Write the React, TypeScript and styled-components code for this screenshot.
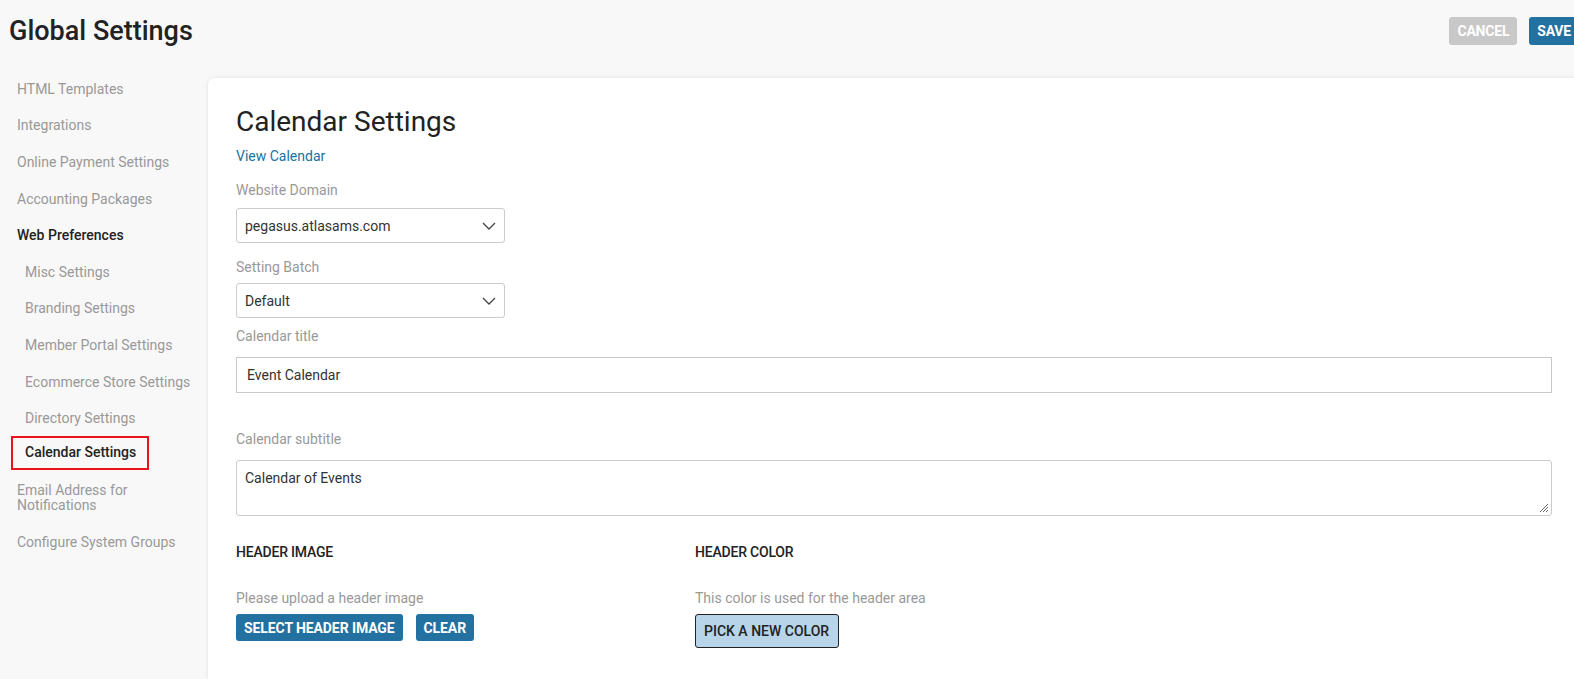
import styled, { createGlobalStyle } from 'styled-components';

const GlobalStyle = createGlobalStyle`
	body {
		margin: 0;
		background: #f8f8f8;
		font-family: Roboto, 'Liberation Sans', sans-serif;
		overflow: hidden;
	}
`;

const Page = styled.div`
	width: 1600px;
	min-height: 679px;
	display: flex;
	flex-direction: column;
`;

const TopBar = styled.div`
	display: flex;
	align-items: center;
	justify-content: space-between;
	height: 62px;
	padding: 0 21px 9px 9px;
`;

const PageTitle = styled.h1`
	margin: 0;
	font-size: 27px;
	font-weight: 500;
	color: #222;
`;

const Actions = styled.div`
	display: flex;
	gap: 12px;
`;

const ActionButton = styled.button<{ $primary?: boolean }>`
	height: 28px;
	padding: 0 8px;
	border: none;
	border-radius: 3px;
	font-family: Roboto, 'Liberation Sans', sans-serif;
	font-size: 14px;
	font-weight: 700;
	letter-spacing: -0.2px;
	color: white;
	background: ${(p) => (p.$primary ? '#2271a1' : '#c8c8c8')};
`;

const Body = styled.div`
	display: flex;
	flex: 1;
`;

const Sidebar = styled.nav`
	width: 208px;
	flex-shrink: 0;
	box-sizing: border-box;
	display: flex;
	flex-direction: column;
	padding: 0 16px 0 0;
`;

const NavItem = styled.div<{ $sub?: boolean; $bold?: boolean; $active?: boolean }>`
	padding: 10.8px 0 10.8px ${(p) => (p.$sub ? '25px' : '17px')};
	font-size: 14px;
	line-height: 15px;
	color: ${(p) => (p.$bold || p.$active ? '#222' : '#999')};
	font-weight: ${(p) => (p.$bold || p.$active ? 500 : 400)};
	${(p) =>
		p.$active &&
		`
		margin: -1px 0 2.5px 11px;
		padding: 7.5px 0 7.5px 12px;
		width: 138px;
		box-sizing: border-box;
		border: 2px solid #e8131f;
	`}
`;

const Panel = styled.main`
	flex: 1;
	margin-top: 7px;
	background: #fff;
	border-top-left-radius: 6px;
	box-shadow: 0 0 4px rgba(0, 0, 0, 0.1);
	padding: 27px 48px 30px 28px;
	display: flex;
	flex-direction: column;
`;

const PanelTitle = styled.h2`
	margin: 0;
	font-size: 28px;
	font-weight: 400;
	line-height: 34px;
	color: #222;
`;

const Link = styled.a`
	display: block;
	margin-top: 9px;
	font-size: 14px;
	line-height: 16px;
	color: #2271a1;
	text-decoration: none;
`;

const Label = styled.div<{ $above: number; $below: number }>`
	margin-top: ${(p) => p.$above}px;
	margin-bottom: ${(p) => p.$below}px;
	font-size: 14px;
	line-height: 16px;
	color: #999;
`;

const Select = styled.div`
	width: 269px;
	height: 35px;
	box-sizing: border-box;
	display: flex;
	align-items: center;
	justify-content: space-between;
	padding: 0 8px 0 8px;
	border: 1px solid #ccc;
	border-radius: 3px;
	font-size: 14px;
	color: #333;
`;

const TextInput = styled.div`
	height: 36px;
	box-sizing: border-box;
	display: flex;
	align-items: center;
	padding: 0 10px;
	border: 1px solid #c8c8c8;
	font-size: 14px;
	color: #333;
`;

const TextArea = styled.div`
	position: relative;
	height: 56px;
	box-sizing: border-box;
	padding: 9px 8px;
	border: 1px solid #ccc;
	border-radius: 3px;
	font-size: 14px;
	color: #333;
`;

const Grip = styled.svg`
	position: absolute;
	right: 2px;
	bottom: 2px;
`;

const Columns = styled.div`
	display: flex;
	margin-top: 28px;
`;

const Column = styled.div`
	width: 459px;
	display: flex;
	flex-direction: column;
`;

const SectionHead = styled.div`
	font-size: 14px;
	font-weight: 500;
	color: #222;
	letter-spacing: -0.2px;
`;

const Hint = styled.div`
	margin-top: 30px;
	margin-bottom: 8px;
	font-size: 14px;
	color: #999;
`;

const ButtonRow = styled.div`
	display: flex;
	gap: 13px;
`;

const BlueButton = styled.button`
	height: 27px;
	padding: 0 8px;
	border: none;
	border-radius: 3px;
	background: #2271a1;
	color: white;
	font-family: Roboto, 'Liberation Sans', sans-serif;
	font-size: 14px;
	font-weight: 700;
	letter-spacing: -0.1px;
`;

const ColorButton = styled.button`
	align-self: flex-start;
	height: 34px;
	padding: 0 9px 0 8px;
	border: 1px solid #222;
	border-radius: 3px;
	background: #b8d4e8;
	color: #222;
	font-family: Roboto, 'Liberation Sans', sans-serif;
	font-size: 14px;
	font-weight: 500;
`;

const Chevron = () => (
	<svg width="14" height="8" viewBox="0 0 14 8" fill="none" stroke="#444" strokeWidth="1.3">
		<path d="M1 1l6 6 6-6" />
	</svg>
);

const navItems: { label: string; sub?: boolean; bold?: boolean; active?: boolean }[] = [
	{ label: 'HTML Templates' },
	{ label: 'Integrations' },
	{ label: 'Online Payment Settings' },
	{ label: 'Accounting Packages' },
	{ label: 'Web Preferences', bold: true },
	{ label: 'Misc Settings', sub: true },
	{ label: 'Branding Settings', sub: true },
	{ label: 'Member Portal Settings', sub: true },
	{ label: 'Ecommerce Store Settings', sub: true },
	{ label: 'Directory Settings', sub: true },
	{ label: 'Calendar Settings', sub: true, active: true },
	{ label: 'Email Address for Notifications' },
	{ label: 'Configure System Groups' },
];

const App = () => {
	return (
		<Page>
			<GlobalStyle />
			<TopBar>
				<PageTitle>Global Settings</PageTitle>
				<Actions>
					<ActionButton>CANCEL</ActionButton>
					<ActionButton $primary>SAVE</ActionButton>
				</Actions>
			</TopBar>
			<Body>
				<Sidebar>
					{navItems.map((n) => (
						<NavItem key={n.label} $sub={n.sub} $bold={n.bold} $active={n.active}>
							{n.label}
						</NavItem>
					))}
				</Sidebar>
				<Panel>
					<PanelTitle>Calendar Settings</PanelTitle>
					<Link href="#">View Calendar</Link>
					<Label $above={18} $below={10}>
						Website Domain
					</Label>
					<Select>
						pegasus.atlasams.com
						<Chevron />
					</Select>
					<Label $above={16} $below={8}>
						Setting Batch
					</Label>
					<Select>
						Default
						<Chevron />
					</Select>
					<Label $above={10} $below={13}>
						Calendar title
					</Label>
					<TextInput>Event Calendar</TextInput>
					<Label $above={38} $below={13}>
						Calendar subtitle
					</Label>
					<TextArea>
						Calendar of Events
						<Grip width="10" height="10" viewBox="0 0 10 10" stroke="#666" strokeWidth="1">
							<path d="M9 1L1 9M9 4L4 9M9 7L7 9" />
						</Grip>
					</TextArea>
					<Columns>
						<Column>
							<SectionHead>HEADER IMAGE</SectionHead>
							<Hint>Please upload a header image</Hint>
							<ButtonRow>
								<BlueButton>SELECT HEADER IMAGE</BlueButton>
								<BlueButton>CLEAR</BlueButton>
							</ButtonRow>
						</Column>
						<Column>
							<SectionHead>HEADER COLOR</SectionHead>
							<Hint>This color is used for the header area</Hint>
							<ColorButton>PICK A NEW COLOR</ColorButton>
						</Column>
					</Columns>
				</Panel>
			</Body>
		</Page>
	);
};

export default App;
